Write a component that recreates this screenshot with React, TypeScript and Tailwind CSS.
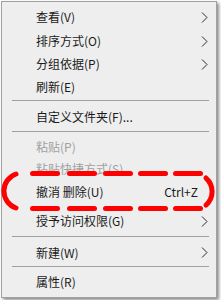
import React from "react";

type Item =
  | { kind: "item"; label: string; h: number; sub?: boolean; disabled?: boolean; shortcut?: string }
  | { kind: "sep"; h: number; at: number };

const items: Item[] = [
  { kind: "item", label: "查看(V)", h: 24, sub: true },
  { kind: "item", label: "排序方式(O)", h: 24, sub: true },
  { kind: "item", label: "分组依据(P)", h: 22, sub: true },
  { kind: "item", label: "刷新(E)", h: 23 },
  { kind: "sep", h: 6, at: 3 },
  { kind: "item", label: "自定义文件夹(F)...", h: 26 },
  { kind: "sep", h: 4, at: 2 },
  { kind: "item", label: "粘贴(P)", h: 25, disabled: true },
  { kind: "item", label: "粘贴快捷方式(S)", h: 19, disabled: true },
  { kind: "item", label: "撤消 删除(U)", h: 28, shortcut: "Ctrl+Z" },
  { kind: "item", label: "授予访问权限(G)", h: 30, sub: true },
  { kind: "sep", h: 3, at: 1 },
  { kind: "item", label: "新建(W)", h: 27, sub: true },
  { kind: "sep", h: 2, at: 1 },
  { kind: "item", label: "属性(R)", h: 28 },
];

function Chevron() {
  return (
    <svg width="7" height="11" viewBox="0 0 7 11" className="block">
      <path d="M1 0.5 L6 5.5 L1 10.5" fill="none" stroke="#2a2a2a" strokeWidth="1" />
    </svg>
  );
}

const dashXs = [30, 67, 103, 138, 173];

export default function App() {
  return (
    <div className="relative w-[221px] h-[300px] bg-white overflow-hidden">
      <div
        className="absolute left-[1px] top-[1px] w-[216px] h-[297px] bg-[#eeeeee] border border-[#a0a0a0] shadow-[2px_2px_3px_rgba(0,0,0,0.45)] flex flex-col pt-[3px]"
        style={{ fontFamily: '"Noto Sans CJK SC", "Noto Sans", sans-serif' }}
      >
        {items.map((it, i) =>
          it.kind === "sep" ? (
            <div key={i} className="relative shrink-0" style={{ height: it.h }}>
              <div
                className="absolute left-[10px] right-[7px] h-px bg-[#a0a0a0]"
                style={{ top: it.at - 1 }}
              />
            </div>
          ) : (
            <div
              key={i}
              className={`shrink-0 flex items-center pl-[34px] pr-[8px] text-[12px] leading-none ${
                it.disabled ? "text-[#a0a0a0]" : "text-[#1a1a1a]"
              }`}
              style={{ height: it.h }}
            >
              <span className="flex-1 whitespace-nowrap">{it.label}</span>
              {it.shortcut && <span className="mr-[10px] whitespace-nowrap">{it.shortcut}</span>}
              {it.sub && <Chevron />}
            </div>
          )
        )}
      </div>
      <svg className="absolute left-0 top-0 pointer-events-none" width="221" height="300">
        <g fill="none" stroke="#ff0000" strokeWidth="5" strokeLinecap="round">
          <path d="M16 174 A18 18 0 0 0 16 208" />
          <path d="M206 178 A18 18 0 0 1 206 205" />
          {dashXs.map((x) => (
            <path key={"t" + x} d={`M${x + 2.5} 173.5 H${x + 27.5}`} />
          ))}
          {dashXs.map((x) => (
            <path key={"b" + x} d={`M${x + 2.5} 208.5 H${x + 27.5}`} />
          ))}
        </g>
      </svg>
    </div>
  );
}
